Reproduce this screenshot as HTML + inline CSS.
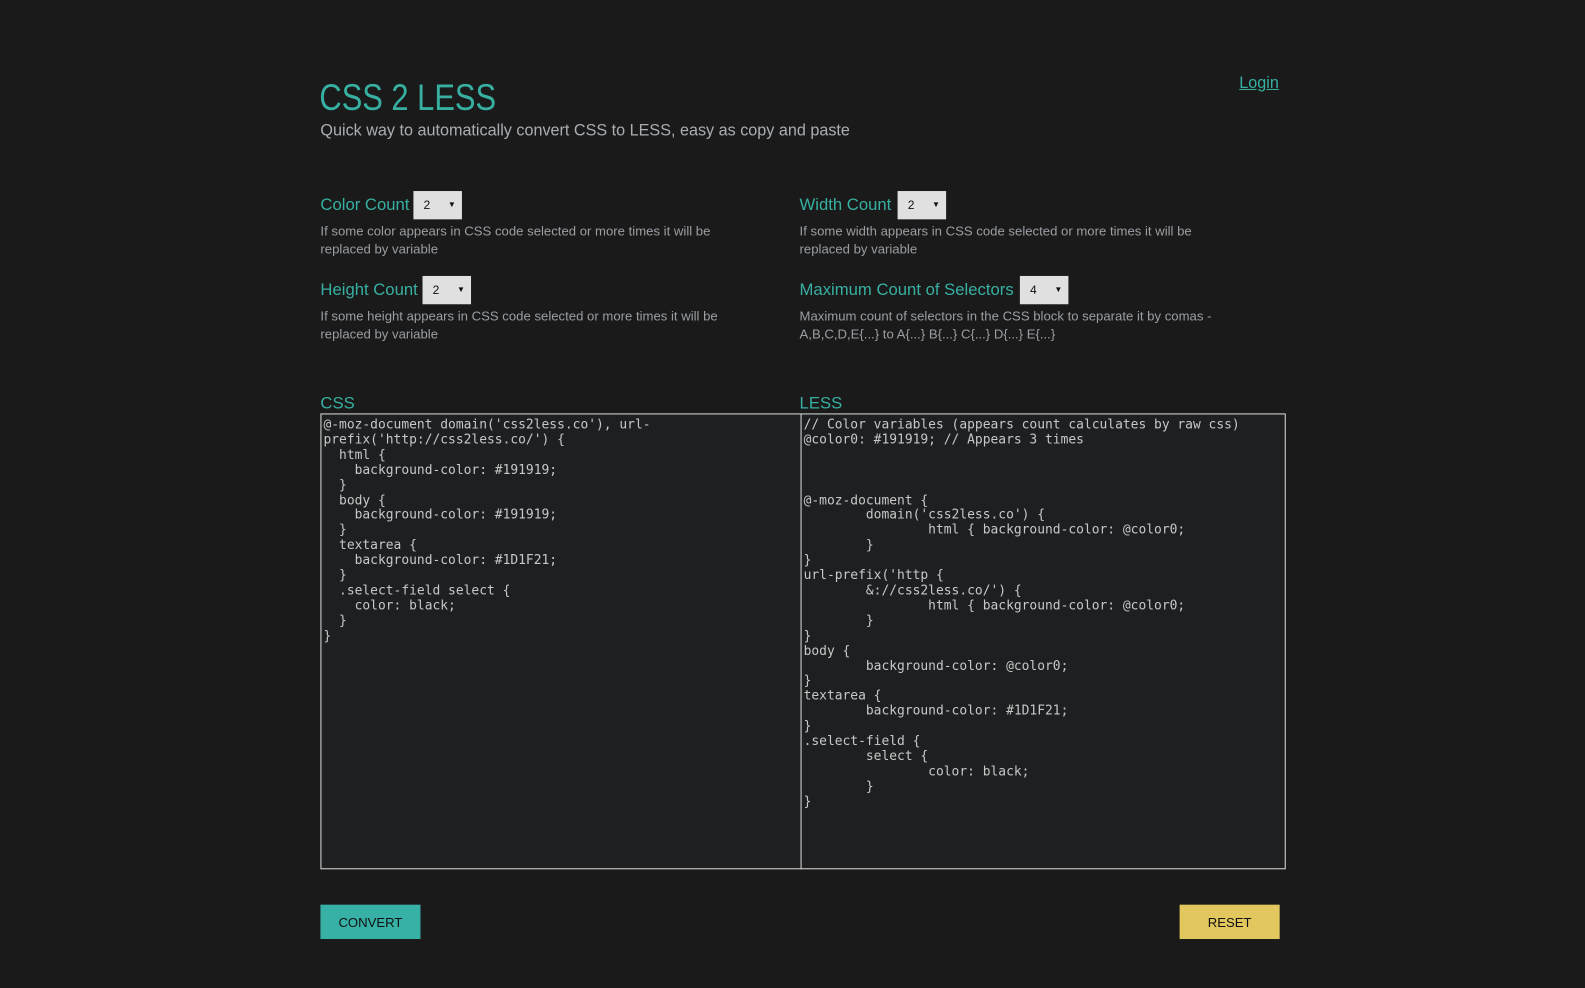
<!DOCTYPE html>
<html><head><meta charset="utf-8"><style>
html,body{margin:0;padding:0;background:#1a1a1a;width:1585px;height:977px;overflow:hidden;font-family:"Liberation Sans",sans-serif;}
#w{position:absolute;left:0;top:0;width:1585px;height:977px;transform:scale(1.0108);transform-origin:0 0;}
.abs{position:absolute;}
h1{position:absolute;left:316px;top:76px;margin:0;font-weight:normal;font-size:37px;color:#37b0a2;transform:scaleX(0.825);transform-origin:0 0;white-space:nowrap;}
.sub{left:317px;top:121px;font-size:16px;color:#a9aeb3;}
.login{left:1226px;top:74px;font-size:16px;color:#37b0a2;text-decoration:underline;}
.lbl{font-size:16.5px;color:#37b0a2;}
.sel{display:inline-block;background:#e0e0e0;color:#111;font-size:12px;height:28px;line-height:28px;width:48px;box-sizing:border-box;padding-left:10px;position:absolute;}
.sel:after{content:"\25BC";position:absolute;right:6px;top:0;font-size:8px;}
.desc{font-size:13px;line-height:18px;color:#9a9fa4;width:420px;}
.ta{position:absolute;top:409px;height:451px;box-sizing:border-box;border:1px solid #ddd;background:#1d1f21;color:#c8c8c8;font-family:"DejaVu Sans Mono","Liberation Mono",monospace;font-size:12.8px;line-height:14.9px;padding:4px 2px 2px;white-space:pre;margin:0;overflow:hidden;}
.btn{position:absolute;top:895px;height:34px;width:99px;font-size:13px;line-height:35px;text-align:center;color:#111;}
</style></head><body><div id="w">
<h1>CSS 2 LESS</h1>
<div class="abs sub">Quick way to automatically convert CSS to LESS, easy as copy and paste</div>
<div class="abs login">Login</div>

<div class="abs lbl" style="left:317px;top:194px">Color Count</div>
<div class="sel" style="left:409px;top:189px">2</div>
<div class="abs desc" style="left:317px;top:220px">If some color appears in CSS code selected or more times it will be replaced by variable</div>

<div class="abs lbl" style="left:791px;top:194px">Width Count</div>
<div class="sel" style="left:888px;top:189px">2</div>
<div class="abs desc" style="left:791px;top:220px">If some width appears in CSS code selected or more times it will be replaced by variable</div>

<div class="abs lbl" style="left:317px;top:278px">Height Count</div>
<div class="sel" style="left:418px;top:273px">2</div>
<div class="abs desc" style="left:317px;top:304px">If some height appears in CSS code selected or more times it will be replaced by variable</div>

<div class="abs lbl" style="left:791px;top:278px">Maximum Count of Selectors</div>
<div class="sel" style="left:1009px;top:273px">4</div>
<div class="abs desc" style="left:791px;top:304px">Maximum count of selectors in the CSS block to separate it by comas - A,B,C,D,E{...} to A{...} B{...} C{...} D{...} E{...}</div>

<div class="abs lbl" style="left:317px;top:390px">CSS</div>
<div class="abs lbl" style="left:791px;top:390px">LESS</div>

<pre class="ta" style="left:317px;width:476px">@-moz-document domain('css2less.co'), url-
prefix('http://css2less.co/') {
  html {
    background-color: #191919;
  }
  body {
    background-color: #191919;
  }
  textarea {
    background-color: #1D1F21;
  }
  .select-field select {
    color: black;
  }
}</pre>
<pre class="ta" style="left:792px;width:480px">// Color variables (appears count calculates by raw css)
@color0: #191919; // Appears 3 times



@-moz-document {
        domain('css2less.co') {
                html { background-color: @color0;
        }
}
url-prefix('http {
        &amp;://css2less.co/') {
                html { background-color: @color0;
        }
}
body {
        background-color: @color0;
}
textarea {
        background-color: #1D1F21;
}
.select-field {
        select {
                color: black;
        }
}</pre>

<div class="btn" style="left:317px;background:#37b0a5">CONVERT</div>
<div class="btn" style="left:1167px;background:#e2c75e">RESET</div>
</div></body></html>
